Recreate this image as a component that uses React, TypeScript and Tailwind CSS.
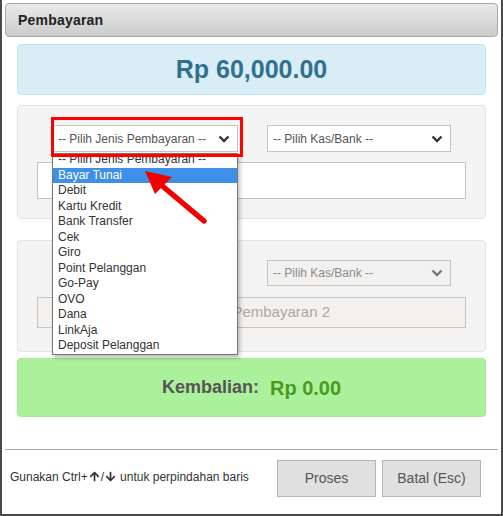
import { FaArrowUp, FaArrowDown } from 'react-icons/fa';

const paymentTypes = [
    '-- Pilih Jenis Pembayaran --',
    'Bayar Tunai',
    'Debit',
    'Kartu Kredit',
    'Bank Transfer',
    'Cek',
    'Giro',
    'Point Pelanggan',
    'Go-Pay',
    'OVO',
    'Dana',
    'LinkAja',
    'Deposit Pelanggan',
];

// Fake select box with a bold chevron on the right
function SelectBox({ label, width, height, disabled }: { label: string; width: string; height: string; disabled?: boolean }) {
    return (
        <div
            className={`flex items-center justify-between border border-[#c4c4c4] pl-[5px] pr-[7px] text-[12px] ${width} ${height} ${
                disabled ? 'bg-[#f3f1ef] text-[#8a8a8a]' : 'bg-white text-[#555]'
            }`}
        >
            <span>{label}</span>
            <svg width="12" height="8" viewBox="0 0 12 8" fill="none">
                <path d="M1.5 1.5 L6 6 L10.5 1.5" stroke={disabled ? '#777' : '#333'} strokeWidth="2.4" />
            </svg>
        </div>
    );
}

export default function App() {
    return (
        <div className="relative w-[503px] h-[516px] bg-white border-x-2 border-b-2 border-[#4a4a4a] font-['Liberation_Sans',Arial,sans-serif] text-[#333]">
            <div className="pt-[3px] px-[3px]">
                {/* Header */}
                <div className="h-[34px] flex items-center pl-[12px] rounded-[4px] border border-[#a9a9a9] bg-gradient-to-b from-[#e9e9e9] to-[#cccccc] text-[14px] font-bold text-[#222] tracking-[0.2px]">
                    Pembayaran
                </div>

                <div className="px-[12px]">
                    {/* Total */}
                    <div className="mt-[7px] h-[51px] flex items-center justify-center rounded-[4px] border border-[#bce8f1] bg-[#d9edf7] text-[25px] font-bold text-[#31708f]">
                        Rp 60,000.00
                    </div>

                    {/* Payment 1 */}
                    <div className="mt-[10px] h-[114px] rounded-[4px] border border-[#e3e3e3] bg-[#f4f4f4] px-[19px] pt-[19px]">
                        <div className="flex justify-center gap-[29px]">
                            <SelectBox label="-- Pilih Jenis Pembayaran --" width="w-[186px]" height="h-[27px]" />
                            <SelectBox label="-- Pilih Kas/Bank --" width="w-[184px]" height="h-[27px]" />
                        </div>
                        <div className="mt-[10px] h-[37px] border border-[#c4c4c4] bg-white" />
                    </div>

                    {/* Payment 2 */}
                    <div className="mt-[21px] h-[112px] rounded-[4px] border border-[#e3e3e3] bg-[#f4f4f4] px-[19px] pt-[19px]">
                        <div className="flex justify-center gap-[29px]">
                            <SelectBox label="" width="w-[186px]" height="h-[26px]" disabled />
                            <SelectBox label="-- Pilih Kas/Bank --" width="w-[184px]" height="h-[26px]" disabled />
                        </div>
                        <div className="mt-[11px] h-[31px] flex items-center justify-end pr-[135px] border border-[#c4c4c4] bg-[#f3f0ee] text-[15px] text-[#a9a9a9]">
                            Pembayaran 2
                        </div>
                    </div>

                    {/* Kembalian */}
                    <div className="mt-[6px] h-[59px] flex items-center justify-center gap-[11px] rounded-[4px] border border-[#a3e893] bg-[#abf19b]">
                        <span className="text-[18px] font-bold text-[#555]">Kembalian:</span>
                        <span className="text-[20px] font-bold text-[#4a9a1f]">Rp 0.00</span>
                    </div>
                </div>

                {/* Footer */}
                <div className="mt-[32px] border-t border-[#aaa] flex items-center pt-[10px] pr-[17px]">
                    <div className="flex-1 pl-[5px] flex items-center text-[12px] text-[#333] -mt-[4px]">
                        Gunakan Ctrl+
                        <FaArrowUp className="text-[11px] mx-[1px]" />/
                        <FaArrowDown className="text-[11px] mx-[1px]" />
                        <span className="ml-[3px]">untuk perpindahan baris</span>
                    </div>
                    <div className="flex gap-[6px]">
                        <button className="w-[99px] h-[37px] bg-[#e0e0e0] border border-[#b5b5b5] text-[14px] text-[#555]">Proses</button>
                        <button className="w-[99px] h-[37px] bg-[#e0e0e0] border border-[#b5b5b5] text-[14px] text-[#555]">Batal (Esc)</button>
                    </div>
                </div>
            </div>

            {/* Open dropdown list */}
            <div className="absolute left-[50px] top-[153px] w-[186px] h-[202px] overflow-hidden border border-[#767676] bg-white shadow-[2px_3px_4px_rgba(0,0,0,0.25)] text-[12px] text-[#333]">
                <div className="-mt-[2px]">
                    {paymentTypes.map((t, i) => (
                        <div
                            key={t}
                            className={`h-[15.5px] leading-[15.5px] pl-[5px] ${i === 1 ? 'bg-[#3d8fe8] text-white' : ''}`}
                        >
                            {t}
                        </div>
                    ))}
                </div>
            </div>

            {/* Red annotation box */}
            <div className="absolute left-[49px] top-[117px] w-[192px] h-[40px] border-[3px] border-[#ff0000]" />

            {/* Red arrow */}
            <svg className="absolute left-[136px] top-[165px]" width="72" height="62" viewBox="0 0 72 62">
                <path d="M66 56 L22 19" stroke="#f20000" strokeWidth="5.5" strokeLinecap="round" />
                <path d="M7 6 L34 12 L17 29 Z" fill="#f20000" />
            </svg>
        </div>
    );
}
